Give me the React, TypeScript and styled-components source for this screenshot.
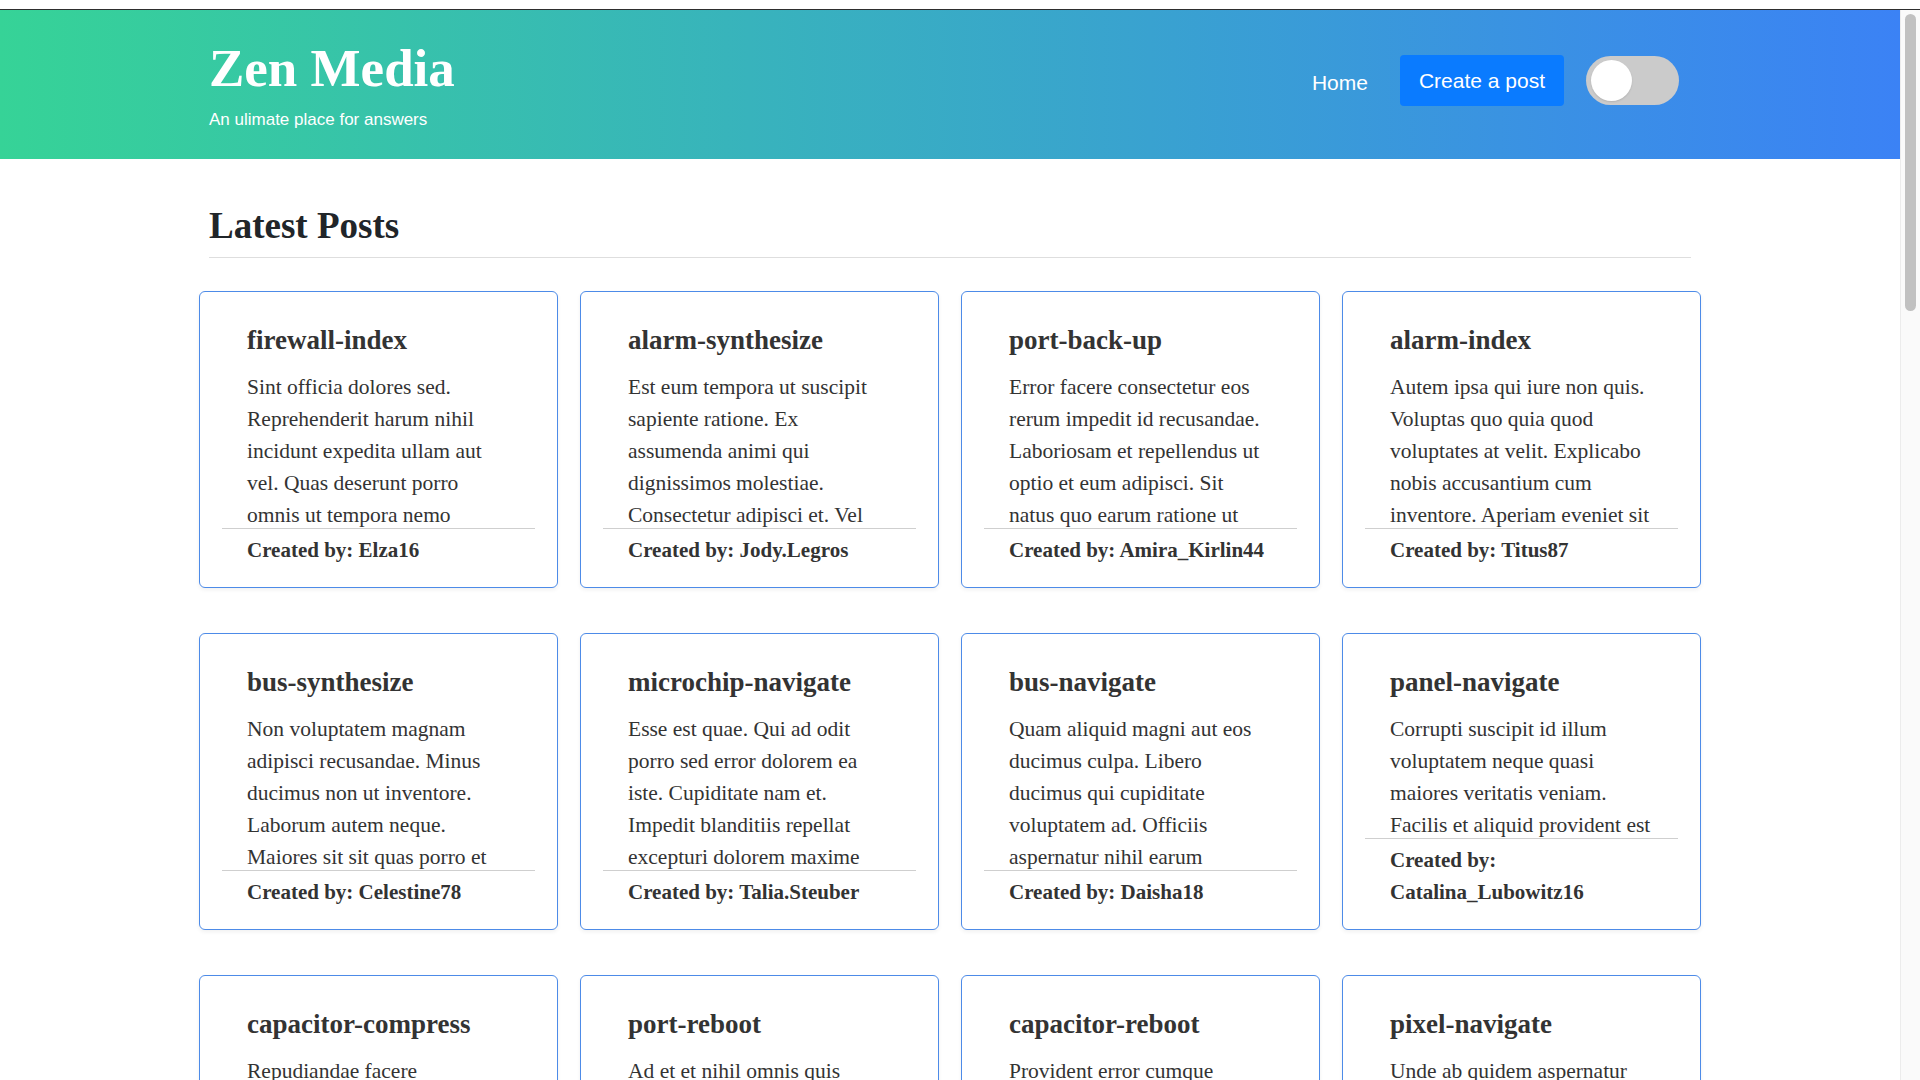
import React from "react";
import styled, { createGlobalStyle } from "styled-components";

const GlobalStyle = createGlobalStyle`
  html, body {
    margin: 0;
    padding: 0;
    height: 100%;
    overflow: hidden;
    background: #fff;
  }
  body {
    font-family: "Liberation Serif", "Times New Roman", serif;
    color: #333;
  }
  * {
    box-sizing: border-box;
  }
`;

const Frame = styled.div`
  height: 100vh;
  display: flex;
  flex-direction: column;
`;

const WindowEdge = styled.div`
  flex: 0 0 10px;
  background: #fff;
  border-bottom: 1px solid #2e2e2e;
`;

const Viewport = styled.div`
  flex: 1;
  min-height: 0;
  display: flex;
`;

const Page = styled.div`
  flex: 1;
  min-width: 0;
  overflow: hidden;
`;

const ScrollTrack = styled.div`
  flex: 0 0 20px;
  background: #fafafa;
  border-left: 1px solid #ececec;
  padding: 4px 4px 0;
`;

const ScrollThumb = styled.div`
  height: 297px;
  border-radius: 6px;
  background: #c1c1c1;
`;

const Header = styled.header`
  background: linear-gradient(to right, #36d397, #3b82f5);
  padding: 29px 0;
`;

const HeaderInner = styled.div`
  width: 78%;
  margin: 0 auto;
  display: flex;
  justify-content: space-between;
  align-items: flex-start;
`;

const Brand = styled.div`
  display: flex;
  flex-direction: column;
`;

const SiteTitle = styled.h1`
  margin: 0;
  font-size: 53px;
  line-height: 59px;
  font-weight: 700;
  color: #fff;
`;

const Tagline = styled.p`
  margin: 12px 0 0;
  font-family: "Liberation Sans", Arial, sans-serif;
  font-size: 17px;
  line-height: 20px;
  color: #fff;
`;

const Nav = styled.nav`
  display: flex;
  align-items: center;
  margin: 16px 12px 0 0;
`;

const NavLink = styled.a`
  font-family: "Liberation Sans", Arial, sans-serif;
  font-size: 21px;
  color: #fff;
  text-decoration: none;
  padding-top: 5px;
  margin-right: 32px;
`;

const PrimaryButton = styled.button`
  height: 51px;
  padding: 0 19px;
  border: none;
  border-radius: 4px;
  background: #0a7bff;
  color: #fff;
  font-family: "Liberation Sans", Arial, sans-serif;
  font-size: 21px;
  margin-right: 22px;
  cursor: pointer;
`;

const Toggle = styled.div`
  width: 93px;
  height: 49px;
  border-radius: 25px;
  background: #cbcbcb;
  display: flex;
  align-items: center;
  padding: 0 5px;
`;

const Knob = styled.span`
  width: 41px;
  height: 41px;
  border-radius: 50%;
  background: #fff;
  box-shadow: 0 1px 2px rgba(0, 0, 0, 0.12);
`;

const Main = styled.main`
  width: 78%;
  margin: 0 auto;
  padding-bottom: 100px;
`;

const SectionTitle = styled.h2`
  margin: 46px 0 11px;
  font-size: 37px;
  line-height: 41px;
  font-weight: 700;
  color: #212529;
`;

const Divider = styled.hr`
  margin: 0;
  border: none;
  border-top: 1px solid #dedede;
`;

const PostGrid = styled.div`
  display: grid;
  grid-template-columns: repeat(4, 1fr);
  gap: 45px 22px;
  margin: 33px -10px 0;
`;

const Card = styled.article`
  height: 297px;
  display: flex;
  flex-direction: column;
  padding: 33px 22px 21px;
  border: 1px solid #4d8be8;
  border-radius: 6px;
  background: #fff;
  box-shadow: 0 2px 4px rgba(0, 0, 0, 0.06);
`;

const CardTitle = styled.h3`
  margin: 0 0 16px;
  padding: 0 25px;
  font-size: 27px;
  line-height: 30px;
  font-weight: 700;
  color: #333;
`;

const CardBody = styled.p`
  flex: 1;
  min-height: 0;
  overflow: hidden;
  margin: 0;
  padding: 0 25px;
  font-size: 21.5px;
  line-height: 32px;
  color: #333;
`;

const CardRule = styled.div`
  flex: 0 0 1px;
  background: #cfcfcf;
`;

const CardFooter = styled.div`
  flex-shrink: 0;
  margin-top: 5px;
  padding: 0 25px;
  font-size: 21px;
  line-height: 32px;
  font-weight: 700;
  color: #333;
`;

type Post = { title: string; body: string; author: string };

const featured: Post[] = [
  {
    title: "firewall-index",
    body: "Sint officia dolores sed. Reprehenderit harum nihil incidunt expedita ullam aut vel. Quas deserunt porro omnis ut tempora nemo voluptatem. Et quia fugit.",
    author: "Elza16",
  },
  {
    title: "alarm-synthesize",
    body: "Est eum tempora ut suscipit sapiente ratione. Ex assumenda animi qui dignissimos molestiae. Consectetur adipisci et. Vel quibusdam ut sed.",
    author: "Jody.Legros",
  },
  {
    title: "port-back-up",
    body: "Error facere consectetur eos rerum impedit id recusandae. Laboriosam et repellendus ut optio et eum adipisci. Sit natus quo earum ratione ut quae.",
    author: "Amira_Kirlin44",
  },
  {
    title: "alarm-index",
    body: "Autem ipsa qui iure non quis. Voluptas quo quia quod voluptates at velit. Explicabo nobis accusantium cum inventore. Aperiam eveniet sit aut.",
    author: "Titus87",
  },
  {
    title: "bus-synthesize",
    body: "Non voluptatem magnam adipisci recusandae. Minus ducimus non ut inventore. Laborum autem neque. Maiores sit sit quas porro et minima.",
    author: "Celestine78",
  },
  {
    title: "microchip-navigate",
    body: "Esse est quae. Qui ad odit porro sed error dolorem ea iste. Cupiditate nam et. Impedit blanditiis repellat excepturi dolorem maxime quia.",
    author: "Talia.Steuber",
  },
  {
    title: "bus-navigate",
    body: "Quam aliquid magni aut eos ducimus culpa. Libero ducimus qui cupiditate voluptatem ad. Officiis aspernatur nihil earum eligendi.",
    author: "Daisha18",
  },
  {
    title: "panel-navigate",
    body: "Corrupti suscipit id illum voluptatem neque quasi maiores veritatis veniam. Facilis et aliquid provident est omnis.",
    author: "Catalina_Lubowitz16",
  },
  {
    title: "capacitor-compress",
    body: "Repudiandae facere voluptatibus. Sed est voluptas ut. Quia dolor et minus.",
    author: "Kyla.Hane",
  },
  {
    title: "port-reboot",
    body: "Ad et et nihil omnis quis consequatur. Ut dolorum qui nobis. Velit tempora aut.",
    author: "Merl_Ward",
  },
  {
    title: "capacitor-reboot",
    body: "Provident error cumque voluptatem. Voluptate rem ipsa et odio. Ut sit quia.",
    author: "Osvaldo63",
  },
  {
    title: "pixel-navigate",
    body: "Unde ab quidem aspernatur doloribus. Quis sed ut natus. Dolores est non.",
    author: "Rene.Koss",
  },
];

const nouns = ["sensor", "driver", "array", "monitor", "matrix", "circuit", "feed", "program", "card", "system"];
const verbs = ["parse", "bypass", "connect", "hack", "quantify", "transmit", "copy", "override", "calculate", "program"];
const people = ["Hollie.Mraz", "Deon42", "Ruben_Yost", "Ines.Bode", "Marlon11", "Ayla_Rau", "Cleo.Kuhn"];
const sentences = [
  "Voluptas aut et dolorem quia.",
  "Molestiae sed id qui eveniet aut.",
  "Nesciunt harum tempore omnis est.",
  "Eos odit quod rerum nam sunt.",
  "Repellat quas illum ut aliquam.",
  "Soluta eum sint labore deleniti.",
];

const posts: Post[] = [
  ...featured,
  ...Array.from({ length: 28 }, (_, i) => ({
    title: `${nouns[i % nouns.length]}-${verbs[(i * 3) % verbs.length]}`,
    body: [0, 1, 2, 3].map((k) => sentences[(i + k) % sentences.length]).join(" "),
    author: people[i % people.length],
  })),
];

const PostCard = ({ post }: { post: Post }) => (
  <Card>
    <CardTitle>{post.title}</CardTitle>
    <CardBody>{post.body}</CardBody>
    <CardRule />
    <CardFooter>Created by: {post.author}</CardFooter>
  </Card>
);

const App = () => {
  return (
    <Frame>
      <GlobalStyle />
      <WindowEdge />
      <Viewport>
        <Page>
          <Header>
            <HeaderInner>
              <Brand>
                <SiteTitle>Zen Media</SiteTitle>
                <Tagline>An ulimate place for answers</Tagline>
              </Brand>
              <Nav>
                <NavLink href="#">Home</NavLink>
                <PrimaryButton>Create a post</PrimaryButton>
                <Toggle>
                  <Knob />
                </Toggle>
              </Nav>
            </HeaderInner>
          </Header>
          <Main>
            <SectionTitle>Latest Posts</SectionTitle>
            <Divider />
            <PostGrid>
              {posts.map((post, i) => (
                <PostCard key={i} post={post} />
              ))}
            </PostGrid>
          </Main>
        </Page>
        <ScrollTrack>
          <ScrollThumb />
        </ScrollTrack>
      </Viewport>
    </Frame>
  );
};

export default App;
